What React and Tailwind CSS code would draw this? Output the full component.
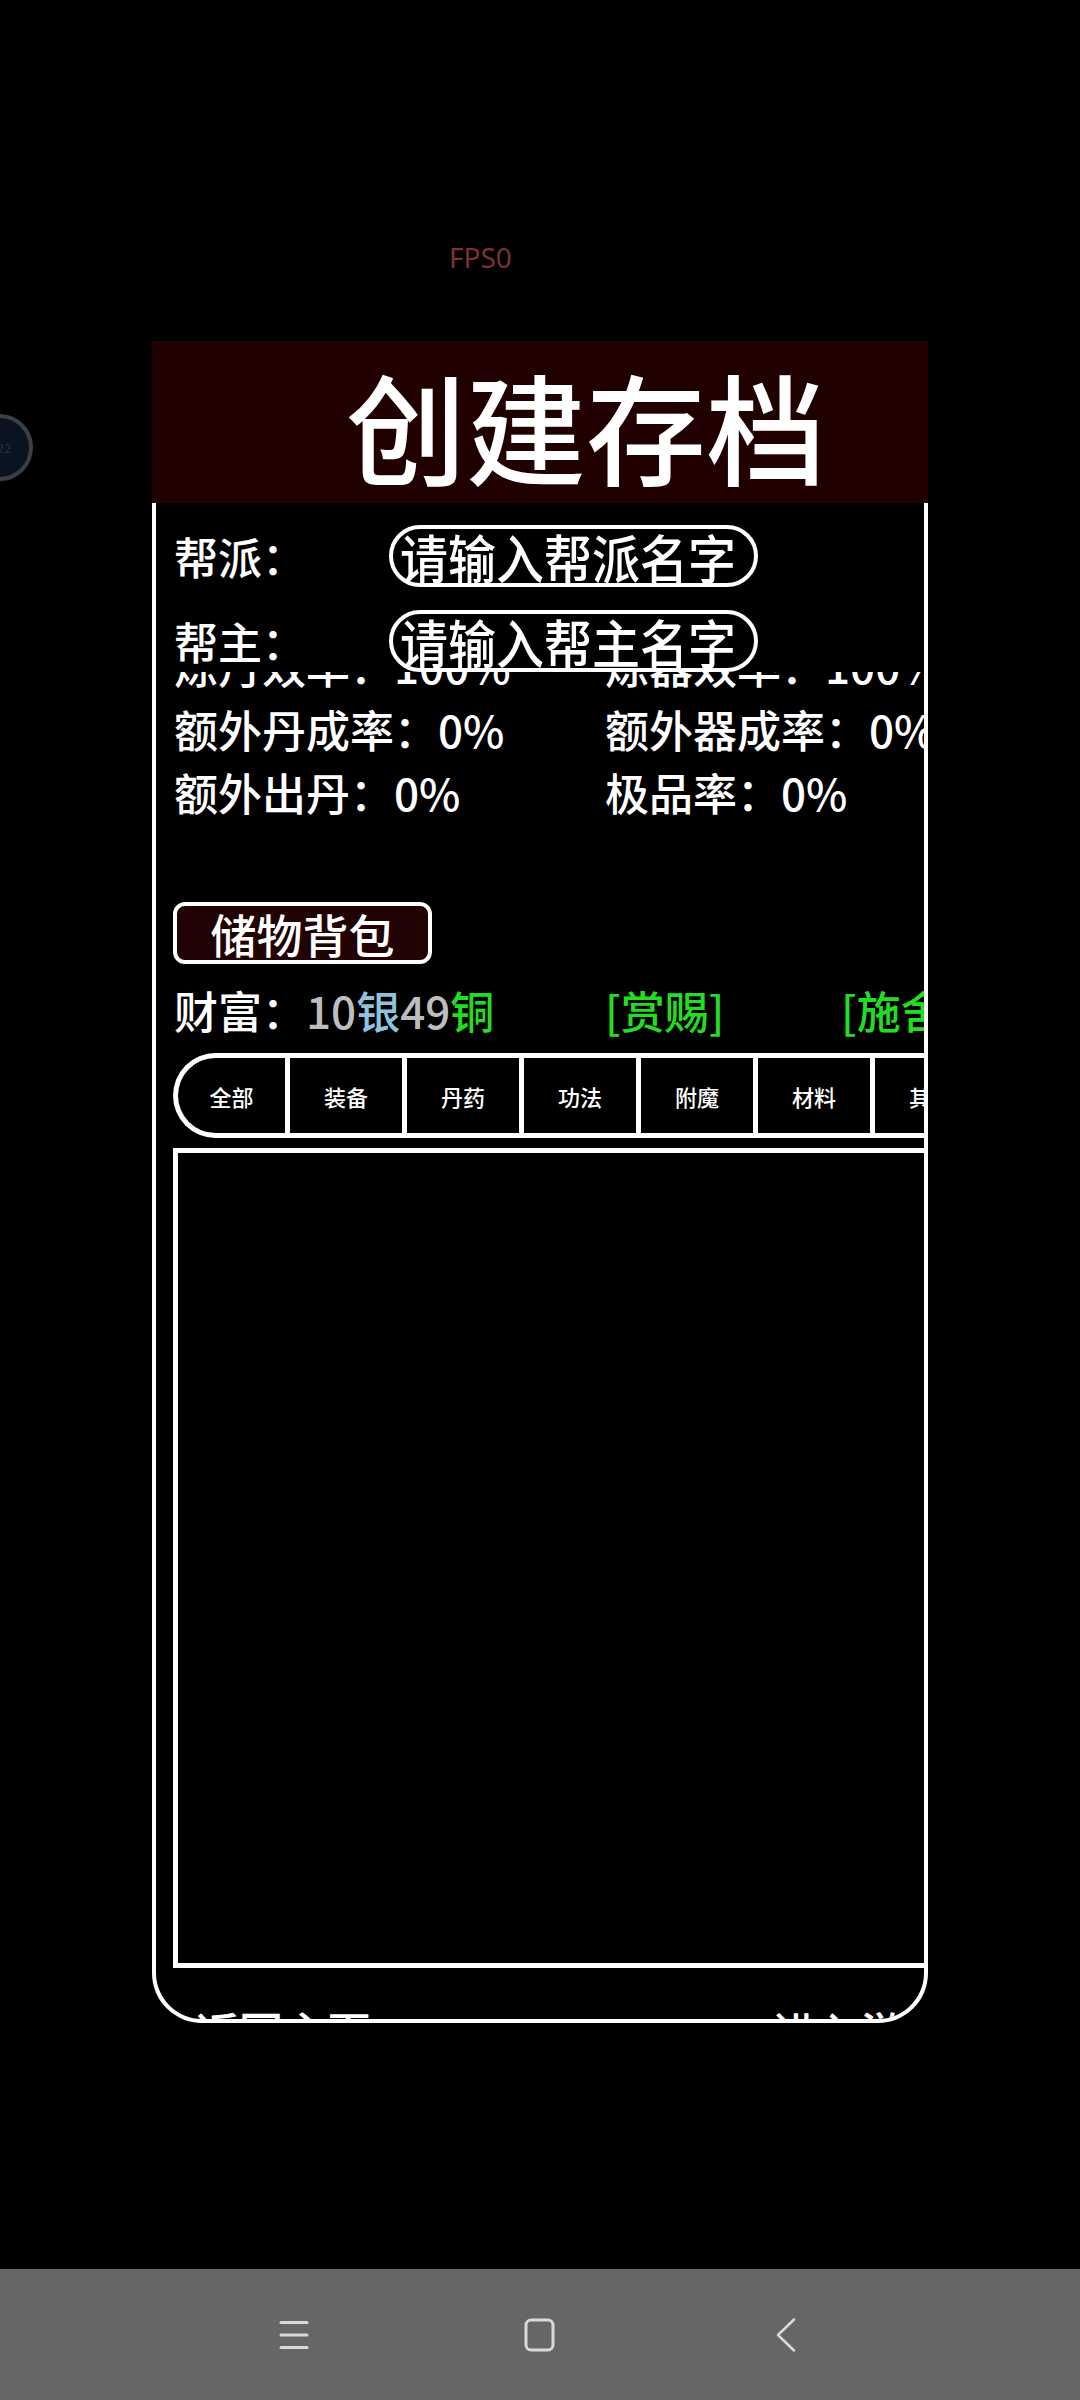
import React from 'react'

const stats = [
  ['炼丹效率：100%', '炼器效率：100%'],
  ['额外丹成率：0%', '额外器成率：0%'],
  ['额外出丹：0%', '极品率：0%'],
]

const tabs = ['全部', '装备', '丹药', '功法', '附魔', '材料', '其他']

function Field({ label, placeholder }) {
  return (
    <div className="flex items-center h-[62px] pl-[18px]">
      <span className="w-[215px] shrink-0 text-[44px] leading-none text-white">{label}</span>
      <div className="w-[369px] h-[62px] shrink-0 border-4 border-white rounded-full flex items-center pl-[7px]">
        <span className="inline-block text-[48px] leading-none text-white scale-y-110 whitespace-nowrap">{placeholder}</span>
      </div>
    </div>
  )
}

export default function App() {
  return (
    <div className="relative h-[2400px] bg-black flex flex-col overflow-hidden font-medium font-['Noto_Sans_CJK_SC','Noto_Sans',sans-serif]">
      {/* floating ball */}
      <div className="absolute left-[-34px] top-[414px] w-[67px] h-[67px] rounded-full border-4 border-[#3a3f44] bg-[#0a1320] flex items-center justify-end pr-[18px]">
        <span className="text-[12px] leading-none text-[#1f2c3a]">22</span>
      </div>

      <div className="h-[341px] shrink-0 pt-[243px] pl-[449px]">
        <span className="text-[28px] leading-none font-normal text-[#7a3232] font-['Noto_Sans',sans-serif]">FPS0</span>
      </div>

      {/* title bar */}
      <div className="ml-[152px] w-[776px] h-[162px] shrink-0 bg-[#210000] flex items-center pl-[194px] pt-[6px]">
        <span className="text-[120px] leading-none text-white whitespace-nowrap">创建存档</span>
      </div>

      {/* panel */}
      <div className="ml-[152px] w-[776px] shrink-0 border-x-4 border-b-4 border-white rounded-b-[50px] overflow-hidden pt-[22px]">
        <Field label="帮派：" placeholder="请输入帮派名字" />
        <div className="mt-[23px]">
          <Field label="帮主：" placeholder="请输入帮主名字" />
        </div>

        <div className="h-[230px] overflow-hidden">
          <div className="-mt-[38px] pl-[18px]">
            {stats.map(([a, b]) => (
              <div key={a} className="flex text-[44px] leading-[63.5px] text-white whitespace-nowrap">
                <span className="w-[431px] shrink-0">{a}</span>
                <span className="shrink-0">{b}</span>
              </div>
            ))}
          </div>
        </div>

        <div className="ml-[17px] w-[259px] h-[62px] border-4 border-white rounded-[12px] bg-[#220303] flex items-center justify-center">
          <span className="text-[46px] leading-none text-white">储物背包</span>
        </div>

        <div className="mt-[16px] h-[60px] flex items-center pl-[18px] text-[44px] leading-none whitespace-nowrap">
          <span className="w-[431px] shrink-0 text-white">
            财富：<span className="text-[#bdbdbd]">10</span>
            <span className="text-[#8ec3de]">银</span>
            <span className="text-[#bdbdbd]">49</span>
            <span className="text-[#22dd22]">铜</span>
          </span>
          <span className="w-[236px] shrink-0 text-[#22dd22]">[赏赐]</span>
          <span className="shrink-0 text-[#22dd22]">[施舍]</span>
        </div>

        {/* bag tabs */}
        <div className="mt-[13px] ml-[17px] w-max flex h-[85px] border-y-[5px] border-l-[5px] border-white rounded-l-[43px]">
          {tabs.map((t, i) => (
            <div key={t}
              className={`${i === 0 ? 'w-[112px]' : 'w-[117px]'} shrink-0 border-r-[5px] border-white flex items-center justify-center text-[22px] leading-none text-white`}>
              {t}
            </div>
          ))}
        </div>

        {/* item grid */}
        <div className="mt-[10px] ml-[17px] w-[800px] h-[820px] border-[5px] border-white" />

        <div className="mt-[41px] h-[10px] flex pl-[39px] text-[44px] leading-none text-white whitespace-nowrap">
          <span className="w-[578px] shrink-0">返回主页</span>
          <span className="shrink-0">进入游戏</span>
        </div>
      </div>

      {/* system nav bar */}
      <div className="mt-auto h-[131px] shrink-0 bg-[#666666] flex items-center justify-center">
        <div className="w-[246px] flex justify-center">
          <svg width="30" height="30" viewBox="0 0 30 30">
            <g stroke="#d9d9d9" strokeWidth="3" strokeLinecap="round">
              <line x1="2" y1="2.5" x2="28" y2="2.5" />
              <line x1="2" y1="15" x2="28" y2="15" />
              <line x1="2" y1="27.5" x2="28" y2="27.5" />
            </g>
          </svg>
        </div>
        <div className="w-[246px] flex justify-center">
          <svg width="32" height="34" viewBox="0 0 32 34">
            <rect x="2" y="2" width="27" height="30" rx="5" fill="none" stroke="#d9d9d9" strokeWidth="3" />
          </svg>
        </div>
        <div className="w-[246px] flex justify-center">
          <svg width="22" height="34" viewBox="0 0 22 34">
            <polyline points="19,1.5 3,17 19,32.5" fill="none" stroke="#d9d9d9" strokeWidth="2.5" strokeLinecap="round" strokeLinejoin="round" />
          </svg>
        </div>
      </div>
    </div>
  )
}
